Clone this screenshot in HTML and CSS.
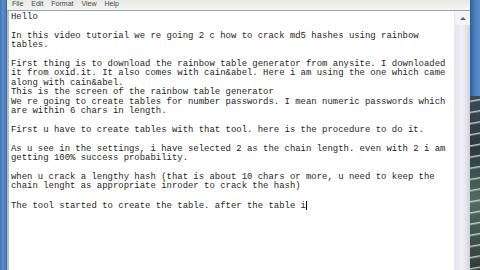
FILE: index.html
```html
<!DOCTYPE html>
<html>
<head>
<meta charset="utf-8">
<link rel="stylesheet" href="styles.css">
</head>
<body>
<div class="screen">
  <div class="frame-left"></div>
  <div class="window">
    <div class="menubar">
      <span class="menu-item">File</span>
      <span class="menu-item">Edit</span>
      <span class="menu-item">Format</span>
      <span class="menu-item">View</span>
      <span class="menu-item">Help</span>
    </div>
    <div class="editor">
      <pre class="text">Hello

In this video tutorial we re going 2 c how to crack md5 hashes using rainbow
tables.

First thing is to download the rainbow table generator from anysite. I downloaded
it from oxid.it. It also comes with cain&amp;abel. Here i am using the one which came
along with cain&amp;abel.
This is the screen of the rainbow table generator
We re going to create tables for number passwords. I mean numeric passwords which
are within 6 chars in length.

First u have to create tables with that tool. here is the procedure to do it.

As u see in the settings, i have selected 2 as the chain length. even with 2 i am
getting 100% success probability.

when u crack a lengthy hash (that is about 10 chars or more, u need to keep the
chain lenght as appropriate inroder to crack the hash)

The tool started to create the table. after the table i<span class="caret"></span></pre>
      <div class="scrollbar">
        <div class="arrow-up"></div>
        <div class="track"></div>
      </div>
    </div>
  </div>
  <div class="frame-right">
    <div class="photo"></div>
  </div>
</div>
</body>
</html>
```
FILE: styles.css
```css
html, body {
  margin: 0;
  padding: 0;
  width: 480px;
  height: 270px;
  overflow: hidden;
  background: #ffffff;
}
.screen {
  display: flex;
  width: 480px;
  height: 270px;
}
.frame-left {
  width: 7px;
  background: linear-gradient(to right, #3d74b2, #5a8fcb 40%, #4d80bd 80%, #2e5f99);
}
.window {
  flex: 1;
  display: flex;
  flex-direction: column;
  background: #ffffff;
}
.menubar {
  height: 10px;
  border-bottom: 1px solid #9aa3ad;
  background: linear-gradient(to bottom, #e9e9e6, #f4f4f2);
  display: flex;
  align-items: flex-start;
  padding-left: 1px;
  font-family: "Liberation Sans", "DejaVu Sans", sans-serif;
  font-size: 7px;
  color: #444;
  line-height: 8px;
}
.menu-item {
  padding: 0 4px;
}
.editor {
  flex: 1;
  display: flex;
  border-left: 2px solid #b8c0c8;
  min-height: 0;
}
.text {
  flex: 1;
  margin: 0;
  padding: 2px 0 0 2px;
  font-family: "Liberation Mono", "DejaVu Sans Mono", monospace;
  font-size: 8.95px;
  line-height: 9.4px;
  color: #262626;
  white-space: pre;
  overflow: hidden;
}
.caret {
  display: inline-block;
  width: 0;
  height: 9px;
  border-left: 1px solid #000;
  vertical-align: -2px;
}
.scrollbar {
  width: 15px;
  display: flex;
  flex-direction: column;
  background: linear-gradient(to right, #e6e4ef, #f1f0f6 45%, #e2e1ea 80%, #cfcfdb);
  border-left: 1px solid #e8e8ee;
}
.arrow-up {
  height: 14px;
  display: flex;
  justify-content: center;
  align-items: center;
  background: #f3f3f6;
}
.arrow-up::before {
  content: "";
  width: 0;
  height: 0;
  border-left: 3px solid transparent;
  border-right: 3px solid transparent;
  border-bottom: 3px solid #4d6185;
}
.track {
  flex: 1;
}
.frame-right {
  width: 10px;
  display: flex;
  flex-direction: column;
  background: linear-gradient(to right, #2d5e98, #4a7fbc 50%, #5b8ec8);
}
.photo {
  margin-top: 96px;
  flex: 1;
  background:
    repeating-linear-gradient(170deg, rgba(255,255,255,0.0) 0px, rgba(255,255,255,0.0) 4px, rgba(235,240,230,0.75) 5px, rgba(255,255,255,0.0) 7px, rgba(0,0,0,0) 11px),
    linear-gradient(to bottom, #3c4a55, #283a3f 30%, #536b66 60%, #2e3c3a);
}
```
